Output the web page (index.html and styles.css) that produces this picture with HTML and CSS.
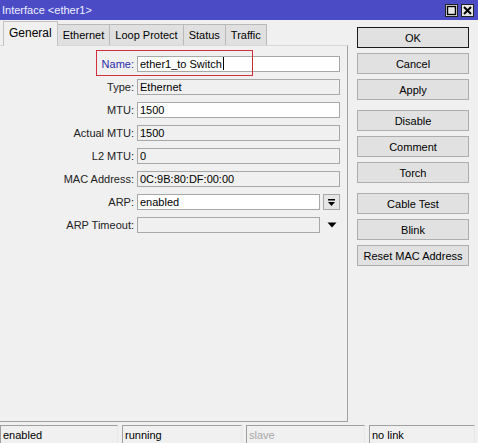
FILE: index.html
```html
<!DOCTYPE html>
<html lang="en">
<head>
    <meta charset="UTF-8">
    <title>Interface &lt;ether1&gt;</title>
    <link rel="stylesheet" href="styles.css">
</head>
<body>
    <div class="window">
        <div class="titlebar">
            <span class="title">Interface &lt;ether1&gt;</span>
            <div class="win-buttons">
                <span class="win-btn">
                    <svg width="11" height="11" viewBox="0 0 11 11"><rect x="1.5" y="1.5" width="8" height="8" fill="none" stroke="#000" stroke-width="1.4"/></svg>
                </span>
                <span class="win-btn">
                    <svg width="11" height="11" viewBox="0 0 11 11"><path d="M2 2 L9 9 M9 2 L2 9" stroke="#000" stroke-width="2"/></svg>
                </span>
            </div>
        </div>

        <div class="main">
            <div class="left">
                <div class="tabs">
                    <div class="tab active">General</div>
                    <div class="tab">Ethernet</div>
                    <div class="tab">Loop Protect</div>
                    <div class="tab">Status</div>
                    <div class="tab">Traffic</div>
                </div>
                <div class="panel">
                    <div class="highlight"></div>
                    <div class="form">
                        <div class="label name-label">Name:</div>
                        <div class="field"><div class="input edit">ether1_to Switch<span class="caret"></span></div></div>

                        <div class="label">Type:</div>
                        <div class="field"><div class="input">Ethernet</div></div>

                        <div class="label">MTU:</div>
                        <div class="field"><div class="input edit">1500</div></div>

                        <div class="label">Actual MTU:</div>
                        <div class="field"><div class="input">1500</div></div>

                        <div class="label">L2 MTU:</div>
                        <div class="field"><div class="input">0</div></div>

                        <div class="label">MAC Address:</div>
                        <div class="field"><div class="input">0C:9B:80:DF:00:00</div></div>

                        <div class="label">ARP:</div>
                        <div class="field">
                            <div class="input edit">enabled</div>
                            <span class="drop-btn">
                                <svg width="9" height="9" viewBox="0 0 9 9"><rect x="1" y="1" width="7" height="1.5" fill="#000"/><path d="M1 4 L8 4 L4.5 8 Z" fill="#000"/></svg>
                            </span>
                        </div>

                        <div class="label">ARP Timeout:</div>
                        <div class="field">
                            <div class="input"></div>
                            <span class="drop-arrow">
                                <svg width="10" height="6" viewBox="0 0 10 6"><path d="M0.5 0.5 L9.5 0.5 L5 5.5 Z" fill="#000"/></svg>
                            </span>
                        </div>
                    </div>
                </div>
            </div>

            <div class="buttons">
                <div class="group">
                    <button class="btn default">OK</button>
                    <button class="btn">Cancel</button>
                    <button class="btn">Apply</button>
                </div>
                <div class="group">
                    <button class="btn">Disable</button>
                    <button class="btn">Comment</button>
                    <button class="btn">Torch</button>
                </div>
                <div class="group">
                    <button class="btn">Cable Test</button>
                    <button class="btn">Blink</button>
                    <button class="btn">Reset MAC Address</button>
                </div>
            </div>
        </div>

        <div class="statusbar">
            <div class="status s1">enabled</div>
            <div class="status s2">running</div>
            <div class="status s3 muted">slave</div>
            <div class="status s4">no link</div>
        </div>
    </div>
</body>
</html>
```

FILE: styles.css
```css
body {
    margin: 0;
    font-family: "Liberation Sans", Arial, sans-serif;
    font-size: 11px;
    color: #000;
    background: #f0f0f0;
}

.window {
    width: 478px;
    height: 443px;
    display: flex;
    flex-direction: column;
    background: #f0f0f0;
    overflow: hidden;
}

.titlebar {
    height: 20px;
    flex: none;
    display: flex;
    align-items: center;
    justify-content: space-between;
    background: #4b4bc6;
    padding: 0 4px 0 2px;
}

.title {
    color: #eef0ff;
    font-size: 11px;
}

.win-buttons {
    display: flex;
    gap: 3px;
    margin-top: 1px;
}

.win-btn {
    width: 13px;
    height: 13px;
    box-sizing: border-box;
    border: 1px solid #222;
    background: #e6e6e6;
    display: flex;
    align-items: center;
    justify-content: center;
}

.main {
    flex: 1;
    display: flex;
}

.left {
    width: 348px;
    flex: none;
    display: flex;
    flex-direction: column;
}

.tabs {
    height: 25px;
    display: flex;
    align-items: flex-end;
    padding-left: 3px;
    flex: none;
}

.tab {
    height: 20px;
    line-height: 20px;
    padding: 0 5px;
    background: #e0e0e0;
    border: 1px solid #b9b9b9;
    border-bottom: none;
    margin-left: -1px;
}

.tab:first-child {
    margin-left: 0;
}

.tab.active {
    height: 24px;
    line-height: 22px;
    font-size: 12px;
    background: #f0f0f0;
    border-color: #c2c2c2;
    position: relative;
    z-index: 1;
    margin-bottom: -1px;
    padding: 0 5px;
}

.panel {
    position: relative;
    height: 377px;
    border-top: 1px solid #d8d8d8;
    border-right: 1px solid #a0a0a0;
    border-bottom: 1px solid #a0a0a0;
    box-sizing: border-box;
    width: 348px;
}

.highlight {
    position: absolute;
    left: 96px;
    top: 4px;
    width: 157px;
    height: 26px;
    box-sizing: border-box;
    border: 1px solid #d0303a;
}

.form {
    display: grid;
    grid-template-columns: 134px 203px;
    column-gap: 3px;
    row-gap: 7px;
    padding-top: 10px;
}

.label {
    text-align: right;
    line-height: 16px;
    height: 16px;
    color: #222;
}

.name-label {
    color: #2a2aa8;
}

.field {
    display: flex;
    gap: 3px;
    height: 16px;
}

.input {
    flex: 1;
    height: 16px;
    box-sizing: border-box;
    border: 1px solid #a8a8a8;
    background: #f0f0f0;
    padding: 0 2px;
    line-height: 14px;
    white-space: nowrap;
}

.input.edit {
    background: #fff;
}

.caret {
    display: inline-block;
    width: 1px;
    height: 13px;
    background: #000;
    vertical-align: top;
    margin-left: 1px;
}

.drop-btn {
    width: 17px;
    height: 16px;
    box-sizing: border-box;
    border: 1px solid #a8a8a8;
    background: #e6e6e6;
    display: flex;
    align-items: center;
    justify-content: center;
}

.drop-arrow {
    width: 17px;
    height: 16px;
    display: flex;
    align-items: center;
    justify-content: center;
}

.buttons {
    padding: 7px 0 0 9px;
    display: flex;
    flex-direction: column;
    gap: 10px;
}

.group {
    display: flex;
    flex-direction: column;
    gap: 5px;
}

.btn {
    width: 112px;
    height: 21px;
    box-sizing: border-box;
    border: 1px solid #adadad;
    background: #e1e1e1;
    font-family: "Liberation Sans", Arial, sans-serif;
    font-size: 11px;
    color: #000;
    padding: 0;
}

.btn.default {
    border-color: #1a1a1a;
}

.statusbar {
    height: 18px;
    flex: none;
    display: flex;
    gap: 4px;
}

.status {
    height: 18px;
    box-sizing: border-box;
    border-top: 1px solid #a0a0a0;
    border-left: 1px solid #a0a0a0;
    border-right: 1px solid #e8e8e8;
    padding: 0 2px;
    line-height: 18px;
}

.s1 { width: 118px; }
.s2 { width: 120px; }
.s3 { width: 119px; }
.s4 { width: 106px; }

.muted {
    color: #a8a8a8;
}
```
